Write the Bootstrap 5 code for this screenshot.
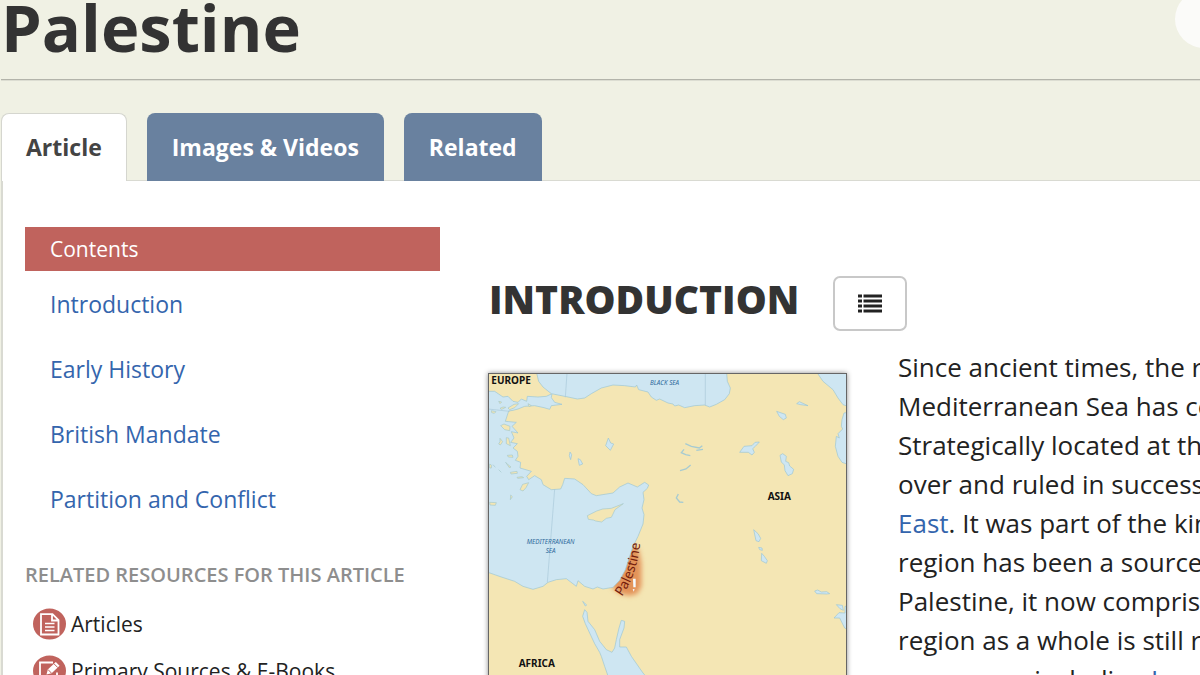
<!DOCTYPE html>
<html lang="en">
<head>
<meta charset="utf-8">
<meta name="viewport" content="width=device-width, initial-scale=1">
<title>Palestine</title>
<link href="https://cdn.jsdelivr.net/npm/bootstrap@5.3.0/dist/css/bootstrap.min.css" rel="stylesheet">
<style>
  body { font-family: "Open Sans", "Noto Sans", sans-serif; background: #f0f1e4; color: #222; overflow-x: hidden; }
  a { color: #3465ad; text-decoration: none; }
  .page-title { font-size: 65px; line-height: 55px; font-weight: 700; color: #333; }
  .title-bar { padding-bottom: 24px; border-bottom: 1px solid #b3b4aa; box-shadow: 0 1px 0 #dcddd2; margin: 0 0 33px 1px; }
  .round-btn { width: 58px; height: 58px; top: -10px; right: -33px; background: #fbfbf9; border: 0; }
  .article-tabs { gap: 20px; margin-left: 1px; border: 0; }
  .article-tabs .nav-link { font-size: 23px; line-height: 34px; font-weight: 700; padding: 17px 25px; color: #fff; background: #69819f; border: 0; border-radius: 8px 8px 0 0; margin: 0; }
  .article-tabs .nav-link:hover { color: #fff; }
  .article-tabs .nav-link.active { color: #444; background: #fff; padding: 16px 24px 17px; border: 1px solid #d5d6cf; border-bottom: 0; position: relative; z-index: 1; }
  .panel { background: #fff; border: solid #d9dad2; border-width: 1px 0 0 2px; margin: -1px 0 0 1px; padding: 46px 0 0 22px; gap: 49px; overflow: hidden; }
  .side-col { width: 415px; flex: none; }
  .contents-head { background: #c0635d; color: #fff; font-size: 21px; line-height: 44px; padding: 0 25px; margin: 0 0 1px; font-weight: 400; }
  .contents-links .nav-link { font-size: 23px; line-height: 65px; padding: 0 25px; color: #3465ad; }
  .related-head { font-size: 20px; line-height: 28px; font-weight: 600; color: #8e8e8e; margin: 29px 0 19px; white-space: nowrap; }
  .resource-links a { font-size: 21px; line-height: 32px; color: #222; margin: 0 0 15px 8px; gap: 5px; }
  .resource-links svg { width: 33px; height: 32px; flex: none; }
  .main-col { min-width: 0; padding-top: 49px; }
  .section-title { font-size: 39px; line-height: 46px; font-weight: 800; color: #333; margin: 0; }
  .list-btn { width: 74px; height: 55px; border: 2px solid #c8c8c8; border-radius: 7px; background: #fff; padding: 0; margin-left: 34px; }
  .story { font-size: 26px; line-height: 39px; margin-top: 17px; gap: 51px; }
  .story p { white-space: nowrap; margin: 0; }
  .map-figure { width: 359px; margin: 25px 0 0 -1px; border: 1px solid #666; box-shadow: 0 0 5px rgba(0,0,0,.45); line-height: 0; }
  .water { fill: #cee6f2; stroke: #9cc6d3; stroke-width: 2; stroke-linejoin: round; }
  .isle { fill: #f4e6b4; stroke: #a5c9cc; stroke-width: 2; }
  .creek { fill: none; stroke: #a6cbd2; stroke-width: 4; }
  .continent { font: 700 30px "Noto Sans", sans-serif; fill: #111; }
  .sea-name { font: italic 19px "Noto Sans", sans-serif; fill: #2f6a9c; }
  .country { font: 40px "Noto Sans", sans-serif; fill: #741d0d; }
</style>
</head>
<body>
<header class="position-relative overflow-hidden">
  <div class="title-bar"><h1 class="page-title mb-0">Palestine</h1></div>
  <button class="round-btn position-absolute rounded-circle" type="button" aria-label="More tools"></button>
  <ul class="nav nav-tabs article-tabs">
    <li class="nav-item"><a class="nav-link active" href="#article" aria-current="page">Article</a></li>
    <li class="nav-item"><a class="nav-link" href="#media">Images &amp; Videos</a></li>
    <li class="nav-item"><a class="nav-link" href="#related">Related</a></li>
  </ul>
</header>
<main class="panel d-flex" id="article">
  <aside class="side-col">
    <h2 class="contents-head">Contents</h2>
    <nav class="nav flex-column contents-links">
      <a class="nav-link" href="#intro">Introduction</a>
      <a class="nav-link" href="#early">Early History</a>
      <a class="nav-link" href="#mandate">British Mandate</a>
      <a class="nav-link" href="#partition">Partition and Conflict</a>
    </nav>
    <h2 class="related-head">RELATED RESOURCES FOR THIS ARTICLE</h2>
    <div class="resource-links">
      <a class="d-flex align-items-center" href="#articles">
        <svg viewBox="0 0 33 32" aria-hidden="true"><ellipse cx="16.5" cy="16" rx="16.5" ry="15.5" fill="#c0635d"/><path d="M8 6.200h11.500l6 6v14.300H8z M19 6.500v6h6" fill="none" stroke="#fff" stroke-width="1.8"/><path d="M12 15.500h9.500M12 19h9.500M12 22.500h9.500" stroke="#fff" stroke-width="1.6"/></svg>
        Articles</a>
      <a class="d-flex align-items-center" href="#sources">
        <svg viewBox="0 0 33 32" aria-hidden="true"><ellipse cx="16.5" cy="16" rx="16.5" ry="15.5" fill="#c0635d"/><path d="M20 7.500H7v18h17v-8" fill="none" stroke="#fff" stroke-width="1.8"/><path d="M13.500 19.500l1.300-5 8-7.500 3.800 3.800-8 7.500z" fill="#fff"/><path d="M21 8.800l3.800 3.800M15 14.500l3.500 3.700" stroke="#c0635d"/></svg>
        Primary Sources &amp; E-Books</a>
    </div>
  </aside>
  <section class="main-col flex-grow-1" id="intro">
    <div class="d-flex align-items-start">
      <h2 class="section-title">INTRODUCTION</h2>
      <button class="list-btn d-flex align-items-center justify-content-center flex-shrink-0" type="button" aria-label="Table of contents">
        <svg width="24" height="19" viewBox="0 0 24 19" aria-hidden="true"><path d="M0 2h4M0 7h4M0 12h4M0 17h4M5.500 2H24M5.500 7H24M5.500 12H24M5.500 17H24" stroke="#222" stroke-width="3.200"/></svg>
      </button>
    </div>
    <div class="story d-flex align-items-start">
      <figure class="map-figure flex-shrink-0">
        <svg class="w-100" viewBox="3 3 1071 990" role="img" aria-label="Map of the region">
          <defs><filter id="glow" x="-30%" y="-30%" width="160%" height="160%"><feGaussianBlur stdDeviation="8"/></filter></defs>
          <rect width="1080" height="1000" fill="#f4e6b4"/>
          <path filter="url(#glow)" fill="#e39358" d="M430 515L452 530 460 570 460 640 448 662 425 668 395 662 370 640 400 590z"/>
          <path class="water" d="M0 55L20 55 45 72 60 70 75 85 90 88 100 78 116 85 118 70 150 72 175 70 192 62 190 74 200 88 222 94 190 98 185 109 168 104 140 98 110 100 90 108 75 112 62 114 52 145 85 148 72 160 90 180 70 176 78 195 68 208 88 212 75 225 88 235 90 250 82 262 98 268 96 285 130 295 116 310 122 320 140 308 160 320 165 335 190 350 218 348 224 335 230 316 260 318 285 335 310 362 325 368 375 360 395 342 420 330 448 342 470 328 482 336 478 346 465 358 468 380 462 405 468 425 465 453 450 490 435 520 425 550 412 590 395 622 375 643 345 648 328 642 315 648 290 640 270 623 265 640 235 617 205 620 180 628 165 640 135 649 105 640 80 625 40 612 0 598z"/>
          <path class="water" d="M146 0L152 25 165 42 190 62 240 72 268 78 290 75 310 62 340 45 375 36 410 38 442 42 446 36 452 50 480 57 490 72 505 82 515 78 540 90 555 93 560 99 572 96 590 104 620 98 650 96 665 102 685 94 710 80 724 62 727 45 718 25 716 0z"/>
          <path class="water" d="M988 0L1005 25 1035 50 1050 75 1065 95 1080 100V0zM1080 118L1068 120 1062 140 1060 160 1064 168 1050 182 1054 195 1045 190 1042 220 1050 250 1062 268 1080 274z"/>
          <path class="water" d="M290 710L284 730 292 752 305 780 320 812 335 838 340 850 350 880 360 909 372 940 400 995 520 995 500 940 465 900 430 850 415 822 395 822 395 800 408 765 410 745 400 742 393 765 385 800 380 825 372 838 355 830 335 805 320 770 300 745 297 718z"/>
          <path class="water" d="M361 195l7 15 9 3-10 19-14-14zM246 237l5 8-3 15-4-12zM270 257l7 3 7 13-10 4zM284 685l12 11-4 3zM755 238l13-18 24-2 9-10 13-1-12 13-8 7 5 11-7 8-11-8zM866 115l26 9 3 11-9 5-12-10zM926 92l8-6 26 12-22-3zM876 247l8-5 11 8-2 15 9 4 3 10 12 10-4 13-13 6-9-15-2-17-9-9zM797 470l13 12 8 14-5 10-9-3zM812 523l10 2 1 7-8-2zM821 541l8 9 9 13-3 8-15-8zM980 654l9-3 11 6 16-1 9 6-9 1-30-1zM1045 695l18 2 3 15-10-5zM1080 700l-9 0 0 20-18-1-15 16 17 0 15 30 10 5z"/>
          <path class="creek" d="M592 212l18 8 24 5 9-7M625 232l20-3M588 229l-8 10 13 6 14 3M576 293l18-5 14-12M571 363l-6 12 10 12 11 1"/>
          <path class="isle" d="M298 428l28-14 18-6 26-2 36-14-25 18-6 13-5 10-15 3-14 11-18-3-7-3-15-2zM96 350l8-16 18-5-8 15-9 10zM5 388l20 1-3 8-16-1zM38 158l10-5 18 7-1 13-15-3zM55 194l7 1 5 23-12-6zM36 196l8 10-7 10-5-3 4-7zM58 247l15-1 2 7-14-1zM68 366l5 5-6 9zM53 268l8 8 8 6-5 2zM67 298l20-3 1 6-19 2zM87 313l15-2 5 3-18 2zM32 85l9 2-5 5zM10 113l14 3-5 5-8-2zM36 106l9-4 8 1-12 6zM120 92l10 6-7 3zM32 290l8 8M15 275l7 8M5 273l6 4-1 8-5 0zM60 105l18-11 14-2-12 12-15 6z"/>
          <path d="M237 0L232 73M652 0V98M200 348L178 628M0 108L65 115" fill="none" stroke="#a9c8da" stroke-width="2"/>
          <path d="M435 617h8v26h-7zM434 648l6 1-3 7z" fill="#f4fbff"/>
          <text class="continent" x="10" y="33">EUROPE</text>
          <text class="continent" x="839" y="382">ASIA</text>
          <text class="continent" x="92" y="883">AFRICA</text>
          <text class="sea-name" x="486" y="37">BLACK SEA</text>
          <text class="sea-name" x="188" y="512" text-anchor="middle">MEDITERRANEAN</text>
          <text class="sea-name" x="188" y="539" text-anchor="middle">SEA</text>
          <path id="coast" d="M402 671Q452 600 460 480" fill="none"/>
          <text class="country"><textPath href="#coast">Palestine</textPath></text>
        </svg>
      </figure>
      <p>Since ancient times, the region<br>Mediterranean Sea has come<br>Strategically located at the<br>over and ruled in succession<br><a href="#east">East</a>. It was part of the kingdoms<br>region has been a source<br>Palestine, it now comprises<br>region as a whole is still referred<br>war zones, including <a href="#israel">Israel</a></p>
    </div>
  </section>
</main>
<script src="https://cdn.jsdelivr.net/npm/bootstrap@5.3.0/dist/js/bootstrap.bundle.min.js"></script>
</body>
</html>
